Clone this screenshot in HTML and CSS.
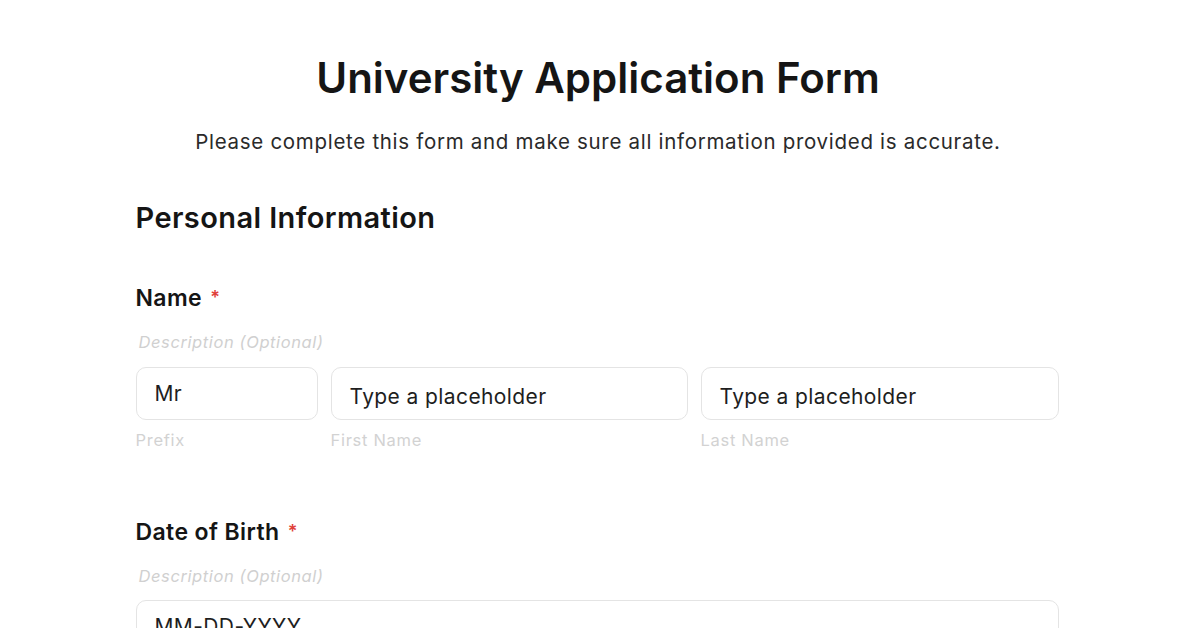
FILE: index.html
```html
<!DOCTYPE html>
<html lang="en">
<head>
<meta charset="utf-8">
<title>University Application Form</title>
<link rel="stylesheet" href="styles.css">
</head>
<body>
<main class="form">
  <header class="form-header">
    <h1 class="form-title">University Application Form</h1>
    <p class="form-subtitle">Please complete this form and make sure all information provided is accurate.</p>
  </header>

  <section class="section">
    <h2 class="section-title">Personal Information</h2>

    <div class="field">
      <div class="field-label">Name <span class="req">*</span></div>
      <div class="field-desc">Description (Optional)</div>
      <div class="name-row">
        <div class="sub">
          <div class="input">Mr</div>
          <div class="sub-label">Prefix</div>
        </div>
        <div class="sub">
          <div class="input">Type a placeholder</div>
          <div class="sub-label">First Name</div>
        </div>
        <div class="sub">
          <div class="input">Type a placeholder</div>
          <div class="sub-label">Last Name</div>
        </div>
      </div>
    </div>

    <div class="field field-dob">
      <div class="field-label">Date of Birth <span class="req">*</span></div>
      <div class="field-desc">Description (Optional)</div>
      <div class="input input-wide">MM-DD-YYYY</div>
    </div>
  </section>
</main>
</body>
</html>
```

FILE: styles.css
```css
* { box-sizing: border-box; }
html, body { margin: 0; padding: 0; background: #ffffff; }
body {
  font-family: Inter, "Noto Sans", "Liberation Sans", sans-serif;
  color: #1a1a1a;
  overflow: hidden;
  height: 628px;
}
.form {
  width: 925px;
  margin: 0 auto;
  padding-top: 51px;
}
.form-header { text-align: center; }
.form-title {
  margin: 0;
  font-size: 42px;
  font-weight: 600;
  line-height: 54px;
  letter-spacing: 0;
  color: #151515;
}
.form-subtitle {
  margin: 24px 0 0;
  font-size: 20.5px;
  line-height: 26px;
  letter-spacing: 0.7px;
  color: #2a2a2a;
}
.section-title {
  margin: 45px 0 0;
  font-size: 29px;
  font-weight: 600;
  line-height: 36px;
  letter-spacing: 0.4px;
  color: #151515;
}
.field { margin-top: 48px; }
.field-label {
  font-size: 23px;
  font-weight: 600;
  line-height: 28px;
  letter-spacing: 0.4px;
  color: #151515;
}
.req {
  color: #e0403a;
  font-size: 18px;
  margin-left: 2px;
  vertical-align: 2px;
}
.field-desc {
  margin-top: 19px;
  padding-left: 3px;
  font-size: 16.5px;
  font-style: italic;
  line-height: 22px;
  letter-spacing: 0.6px;
  color: #d0d0d0;
}
.name-row {
  display: grid;
  grid-template-columns: 182px 357px 358px;
  gap: 13px;
  margin-top: 14px;
}
.input {
  height: 53px;
  border: 1.5px solid #e4e4e4;
  border-radius: 10px;
  padding: 0 18px;
  display: flex;
  align-items: center;
  font-size: 21px;
  letter-spacing: 0.4px;
  color: #1e1e1e;
  background: #fff;
}
.name-row .sub:not(:first-child) .input { padding-top: 6px; }
.sub-label {
  margin-top: 9px;
  font-size: 16.5px;
  line-height: 22px;
  letter-spacing: 0.7px;
  color: #d2d2d2;
}
.field-dob { margin-top: 67px; }
.input-wide { margin-top: 13px; width: 923px; }
```
